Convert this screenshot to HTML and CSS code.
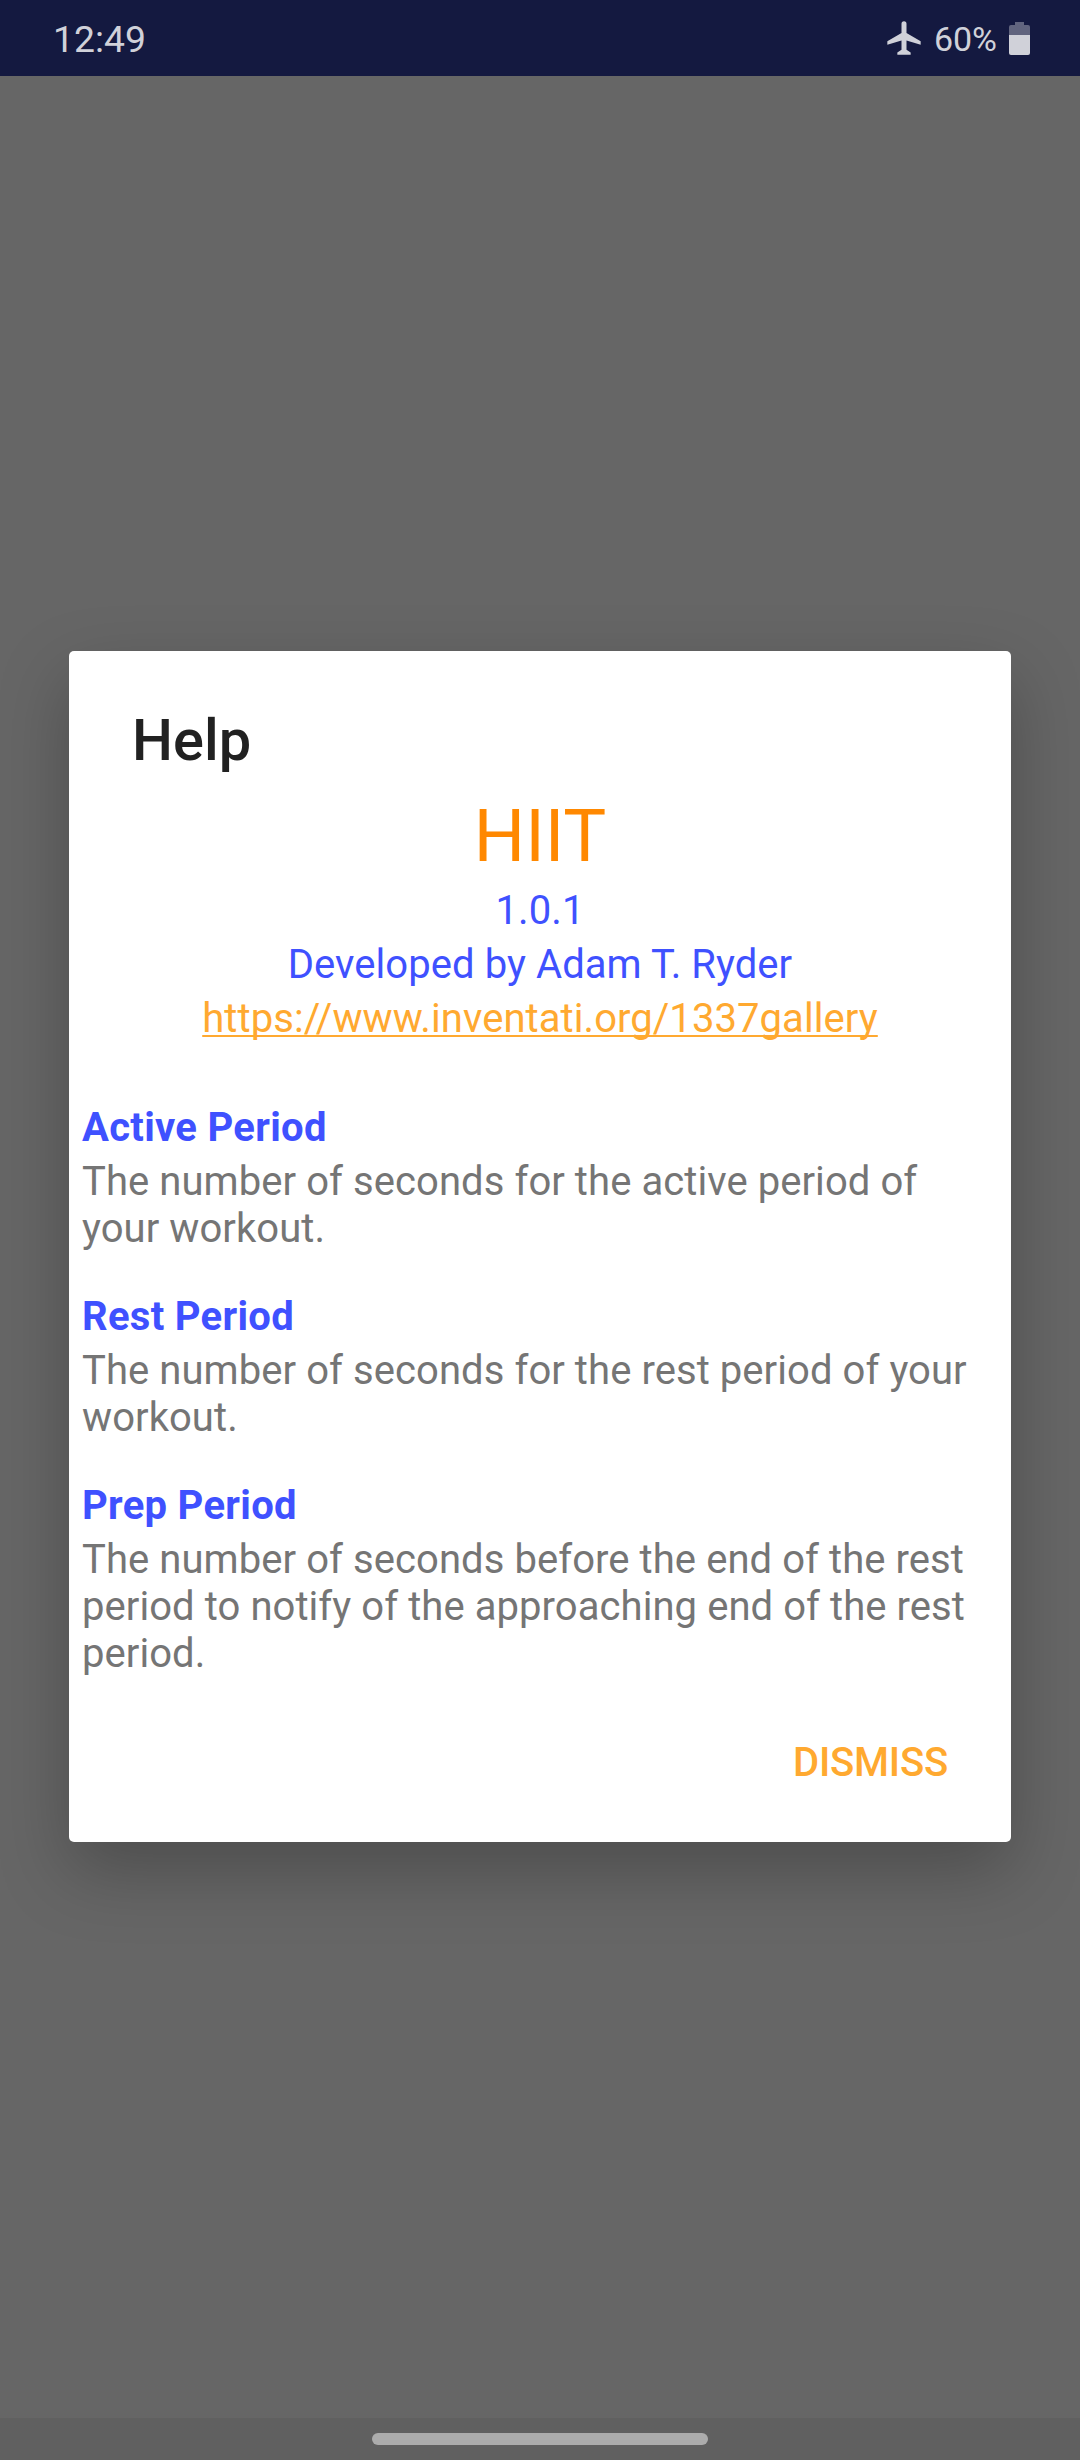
FILE: index.html
```html
<!DOCTYPE html>
<html lang="en">
<head>
<meta charset="utf-8">
<title>Help</title>
<link rel="stylesheet" href="styles.css">
</head>
<body>
<div class="screen">
  <header class="status">
    <span class="clock">12:49</span>
    <svg class="plane" viewBox="0 0 24 24"><path d="M22 16v-2l-8.500-5V3.500a1.500 1.500 0 0 0-3 0V9L2 14v2l8.500-2.500V19L8 20.700V22h8v-1.300L13.500 19v-5.500z"/></svg>
    <span class="percent">60%</span>
    <svg class="battery" viewBox="0 0 21 33"><path class="level-empty" d="M6 0h9v3h4q2 0 2 2v8H0V5q0-2 2-2h4z"/><path d="M0 13h21v18q0 2-2 2H2q-2 0-2-2z"/></svg>
  </header>
  <main class="scrim">
    <section class="dialog">
      <h1 class="title">Help</h1>
      <div class="app">HIIT</div>
      <div class="about">1.0.1</div>
      <div class="about">Developed by Adam T. Ryder</div>
      <div class="about"><a class="link">https://www.inventati.org/1337gallery</a></div>
      <div class="sections">
        <h2 class="heading">Active Period</h2>
        <p class="text">The number of seconds for the active period of<br>your workout.</p>
        <h2 class="heading">Rest Period</h2>
        <p class="text">The number of seconds for the rest period of your<br>workout.</p>
        <h2 class="heading">Prep Period</h2>
        <p class="text">The number of seconds before the end of the rest<br>period to notify of the approaching end of the rest<br>period.</p>
      </div>
      <div class="actions"><span class="dismiss">DISMISS</span></div>
    </section>
  </main>
  <footer class="nav"><div class="handle"></div></footer>
</div>
</body>
</html>
```
FILE: styles.css
```css
* { box-sizing: border-box; }
body { margin: 0; font-family: Roboto, sans-serif; }
.screen { width: 1080px; height: 2460px; display: flex; flex-direction: column; background: #666; overflow: hidden; }
.status { height: 76px; background: #141940; color: #d0d1d9; display: flex; align-items: center; padding: 0 50px 0 53px; font-size: 37.3px; }
.clock { flex: 1; padding-top: 2px; }
.plane { width: 40px; height: 40px; fill: #d0d1d9; margin-right: 10px; }
.percent { font-size: 34px; margin-right: 12px; padding-top: 2px; }
.battery { width: 21px; height: 33px; fill: #d0d1d9; }
.battery .level-empty { fill: #61647e; }
.scrim { flex: 1; padding: 575px 69px 0; }
.dialog { height: 1191px; background: #fff; border-radius: 5px; box-shadow: 0 28px 70px rgba(0,0,0,.25); padding-top: 54px; }
.title { margin: 0; padding-left: 63px; font-size: 57.750px; line-height: 70px; font-weight: 500; color: #212121; }
.app { margin: 19px 0 4px; text-align: center; font-size: 72px; line-height: 86px; color: #ff8800; }
.about { text-align: center; font-size: 40px; letter-spacing: .07px; line-height: 54px; color: #3f51ff; }
.link { color: #ffa930; text-decoration: underline; text-decoration-thickness: 2px; text-underline-offset: 3px; text-decoration-skip-ink: none; }
.sections { padding: 55px 13px 0; }
.heading { margin: 0; font-size: 40px; letter-spacing: .3px; line-height: 54px; font-weight: 700; color: #3f51ff; }
.text { margin: 3px 0 38px; font-size: 40px; letter-spacing: .07px; line-height: 47px; color: #757575; }
.actions { display: flex; justify-content: flex-end; padding: 24px 63px 0; }
.dismiss { font-size: 40px; letter-spacing: -.2px; line-height: 47px; font-weight: 500; color: #ffa930; }
.nav { height: 42px; background: #606060; display: flex; justify-content: center; padding-top: 15px; }
.handle { width: 336px; height: 12px; border-radius: 6px; background: #acacac; }
```
